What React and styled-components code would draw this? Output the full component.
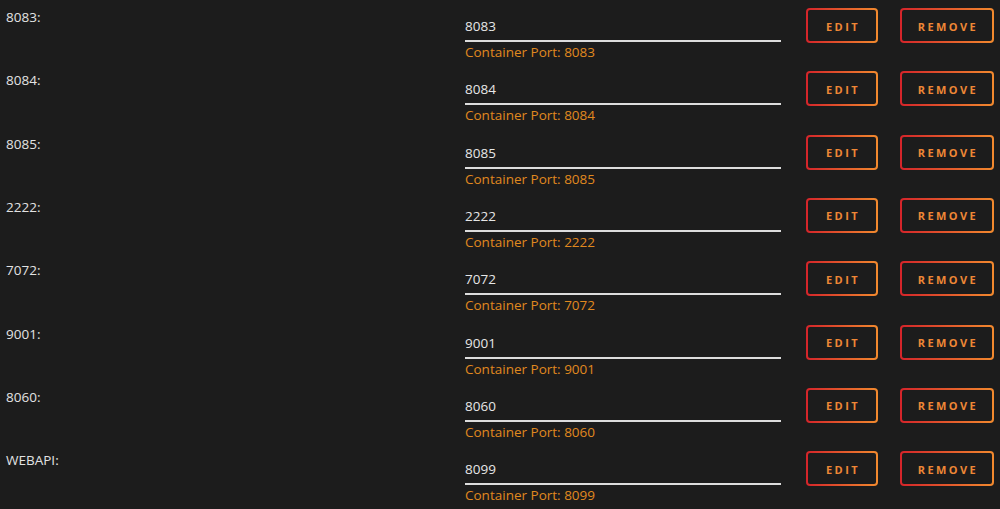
import styled, { createGlobalStyle } from "styled-components";

const ports = [
    { name: "8083", value: "8083" },
    { name: "8084", value: "8084" },
    { name: "8085", value: "8085" },
    { name: "2222", value: "2222" },
    { name: "7072", value: "7072" },
    { name: "9001", value: "9001" },
    { name: "8060", value: "8060" },
    { name: "WEBAPI", value: "8099" },
];

const GlobalStyle = createGlobalStyle`
    html, body {
        margin: 0;
        background: #1c1c1c;
        font-family: "Open Sans", "Noto Sans", sans-serif;
    }
`

const App = () => {
    return (
        <>
            <GlobalStyle />
            <PortList>
                {ports.map((port) => (
                    <PortRow key={port.name}>
                        <PortLabel>{port.name}:</PortLabel>
                        <Field>
                            <PortInput defaultValue={port.value} />
                            <Helper>Container Port: {port.value}</Helper>
                        </Field>
                        <Actions>
                            <OutlineButton width={72}>Edit</OutlineButton>
                            <OutlineButton width={94}>Remove</OutlineButton>
                        </Actions>
                    </PortRow>
                ))}
            </PortList>
        </>
    )
}

export default App;

const PortList = styled.div`
    display: flex;
    flex-direction: column;
    width: 1000px;
`

const PortRow = styled.div`
    display: flex;
    height: 63.33px;
    box-sizing: border-box;
`

const PortLabel = styled.div`
    width: 459px;
    padding: 8px 0 0 6px;
    font-size: 13.5px;
    line-height: 18px;
    color: #e2e2e2;
`

const Field = styled.div`
    display: flex;
    flex-direction: column;
    width: 316px;
`

const PortInput = styled.input`
    box-sizing: border-box;
    width: 100%;
    padding: 17px 0 5px;
    margin: 0;
    height: 42px;
    border: none;
    border-bottom: 2px solid #dcdcdc;
    background: transparent;
    color: #e6e6e6;
    font-family: inherit;
    font-size: 13.5px;
    line-height: 18px;
    outline: none;
`

const Helper = styled.div`
    margin-top: 1px;
    font-size: 13.5px;
    line-height: 18px;
    color: #e0891f;
`

const Actions = styled.div`
    display: flex;
    gap: 22px;
    margin-left: 25px;
    padding-top: 8px;
    align-items: flex-start;
`

const OutlineButton = styled.button`
    box-sizing: border-box;
    width: ${(props) => props.width}px;
    height: 35px;
    border: 2px solid transparent;
    border-radius: 4px;
    background:
        linear-gradient(#1c1c1c, #1c1c1c) padding-box,
        linear-gradient(90deg, #d4242a, #f28a2e) border-box;
    color: #ee8736;
    font-family: "Open Sans", sans-serif;
    font-weight: 700;
    font-size: 11px;
    letter-spacing: 2.4px;
    text-transform: uppercase;
    padding: 1px 0 0 2px;
    cursor: pointer;
`
